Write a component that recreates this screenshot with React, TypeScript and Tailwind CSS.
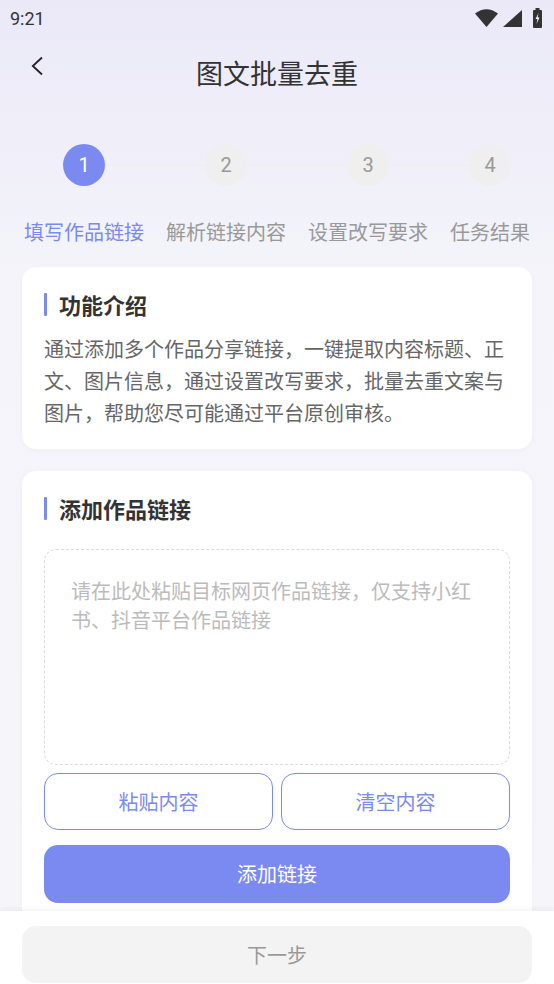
import React from 'react';

const steps = [
  { n: 1, label: '填写作品链接', active: true },
  { n: 2, label: '解析链接内容', active: false },
  { n: 3, label: '设置改写要求', active: false },
  { n: 4, label: '任务结果', active: false },
];

function StatusBar() {
  return (
    <div className="h-[36px] flex items-center justify-between pl-[10px] pr-[12px]">
      <span className="text-[18px] text-[#333] font-['Roboto',sans-serif]">9:21</span>
      <div className="flex items-center">
        <svg width="23" height="18" viewBox="0 0 23 18">
          <path d="M0 4.5 Q11.5 -4 23 4.5 L11.5 18 Z" fill="#333" />
        </svg>
        <svg width="19" height="17" viewBox="0 0 19 17" className="ml-[5px]">
          <path d="M19 0 L19 17 L0 17 Z" fill="#333" />
        </svg>
        <svg width="9" height="20" viewBox="0 0 9 20" className="ml-[11px]">
          <rect x="2.5" y="0" width="4" height="2" fill="#333" />
          <rect x="0" y="2" width="9" height="18" rx="1" fill="#333" />
          <path d="M5.5 5 L2.5 11 L4.5 11 L3.5 16 L6.5 9.5 L4.5 9.5 Z" fill="#fff" />
        </svg>
      </div>
    </div>
  );
}

function SectionTitle({ children }: { children: React.ReactNode }) {
  return (
    <div className="flex items-center gap-[12px] h-[24px]">
      <div className="w-[3px] h-[23px] rounded-[1px] bg-[#7b8af0]" />
      <h2 className="text-[22px] leading-[24px] font-bold text-[#333]">{children}</h2>
    </div>
  );
}

export default function App() {
  return (
    <div className="w-[554px] h-[984px] flex flex-col overflow-hidden bg-[#f5f5fa] font-['Noto_Sans_CJK_SC','Noto_Sans',sans-serif]">
      <div className="flex-1 overflow-hidden bg-gradient-to-b from-[#ebe9f8] via-[#f4f4fa] via-30% to-[#f5f5fa]">
        <StatusBar />

        <div className="h-[74px] flex items-center relative">
          <button className="absolute left-[30px] top-[19px]">
            <svg width="14" height="22" viewBox="0 0 14 22">
              <polyline points="12,2.5 2.8,11 12,19.5" fill="none" stroke="#222" strokeWidth="1.8" />
            </svg>
          </button>
          <h1 className="flex-1 text-center text-[27px] leading-[36px] text-[#333]">图文批量去重</h1>
        </div>

        <div className="relative mt-[34px] px-[24px] flex justify-between">
          <div className="absolute left-[83px] right-[62px] top-[20px] h-[2px] bg-[#efeff2]" />
          {steps.map((s) => (
            <div key={s.n} className="relative flex flex-col items-center">
              <div
                className={
                  s.active
                    ? 'w-[42px] h-[42px] rounded-full bg-[#7b8af0] text-white flex items-center justify-center text-[20px] font-[\'Roboto\',sans-serif]'
                    : 'w-[42px] h-[42px] rounded-full bg-[#efefef] text-[#999] flex items-center justify-center text-[20px] font-[\'Roboto\',sans-serif]'
                }
              >
                {s.n}
              </div>
              <div
                className={
                  s.active
                    ? 'mt-[32px] text-[20px] leading-[28px] text-[#7b8af0]'
                    : 'mt-[32px] text-[20px] leading-[28px] text-[#999]'
                }
              >
                {s.label}
              </div>
            </div>
          ))}
        </div>

        <div className="mt-[21px] mx-[22px] flex flex-col gap-[22px]">
          <div className="bg-white rounded-[14px] shadow-[0_1px_6px_rgba(0,0,0,0.03)] px-[22px] pt-[25px] pb-[20px]">
            <SectionTitle>功能介绍</SectionTitle>
            <p className="mt-[17px] text-[20px] leading-[32px] text-[#666]">
              通过添加多个作品分享链接，一键提取内容标题、正文、图片信息，通过设置改写要求，批量去重文案与图片，帮助您尽可能通过平台原创审核。
            </p>
          </div>

          <div className="bg-white rounded-[14px] shadow-[0_1px_6px_rgba(0,0,0,0.03)] px-[22px] pt-[25px] pb-[22px]">
            <SectionTitle>添加作品链接</SectionTitle>
            <div className="mt-[29px] h-[216px] rounded-[12px] border border-dashed border-[#dcdcdc] px-[26px] pt-[26px]">
              <p className="text-[20px] leading-[29px] text-[#bbb]">
                请在此处粘贴目标网页作品链接，仅支持小红书、抖音平台作品链接
              </p>
            </div>
            <div className="mt-[8px] grid grid-cols-2 gap-[8px]">
              <button className="h-[57px] rounded-[14px] border-[1.5px] border-[#7b8af0] text-[20px] text-[#7b8af0]">粘贴内容</button>
              <button className="h-[57px] rounded-[14px] border-[1.5px] border-[#7b8af0] text-[20px] text-[#7b8af0]">清空内容</button>
            </div>
            <button className="mt-[15px] w-full h-[58px] rounded-[14px] bg-[#7b8af0] text-[20px] text-white">添加链接</button>
          </div>
        </div>
      </div>

      <div className="h-[73px] shrink-0 bg-white shadow-[0_-2px_6px_rgba(0,0,0,0.05)] px-[22px] pt-[15px] relative">
        <button className="w-full h-[57px] rounded-[14px] bg-[#f3f3f3] text-[20px] text-[#999]">下一步</button>
      </div>
    </div>
  );
}
